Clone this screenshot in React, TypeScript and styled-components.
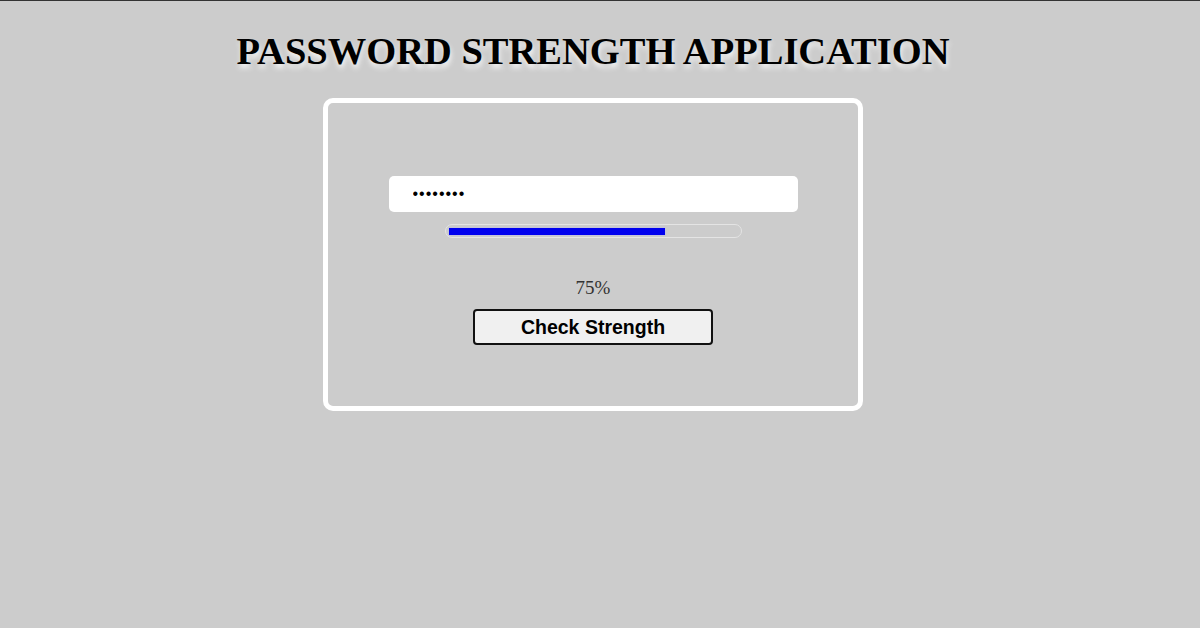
import React from "react";
import styled, { createGlobalStyle } from "styled-components";

const Global = createGlobalStyle`
  html, body { margin: 0; padding: 0; background: #cccccc; }
  body { border-top: 1px solid #333; min-height: 627px; font-family: "Liberation Serif", "Times New Roman", serif; }
`;

const Page = styled.div`
  width: 1186px;
  display: flex;
  flex-direction: column;
  align-items: center;
`;

const Title = styled.h1`
  margin: 28px 0 0;
  font-family: "Liberation Serif", "Times New Roman", serif;
  font-weight: bold;
  font-size: 38.5px;
  line-height: 44px;
  color: #000;
  text-shadow: 1px 4px 5px #f4f4f4;
`;

const Card = styled.div`
  margin-top: 25px;
  width: 530px;
  height: 303px;
  border: 5px solid #ffffff;
  border-radius: 10px;
  display: flex;
  flex-direction: column;
  align-items: center;
  box-sizing: content-box;
`;

const Input = styled.input`
  margin-top: 73px;
  width: 409px;
  height: 36px;
  box-sizing: border-box;
  border: none;
  border-radius: 5px;
  background: #fff;
  padding: 0 0 0 24px;
  font-size: 16px;
  font-family: "Liberation Sans", Arial, sans-serif;
  letter-spacing: 1px;
  color: #000;
  outline: none;
`;

const Track = styled.div`
  margin-top: 12px;
  width: 297px;
  height: 14px;
  box-sizing: border-box;
  border: 1px solid #e4e4e4;
  border-radius: 7px;
  padding: 2px 3px;
  display: flex;
  align-items: center;
`;

const Fill = styled.div`
  height: 7px;
  background: #0000ee;
  box-shadow: 0 0 2px #b0b0ff;
`;

const Percent = styled.div`
  margin-top: 39px;
  font-size: 19px;
  line-height: 22px;
  color: #333;
  font-family: "Liberation Serif", "Times New Roman", serif;
`;

const Button = styled.button`
  margin-top: 10px;
  width: 240px;
  height: 36px;
  box-sizing: border-box;
  background: #f0f0f0;
  border: 2px solid #111;
  border-radius: 4px;
  font-family: "Liberation Sans", Arial, sans-serif;
  font-weight: bold;
  font-size: 19.5px;
  color: #000;
  padding: 0;
  cursor: pointer;
`;

export default function App() {
  const pct = 75;
  return (
    <>
      <Global />
      <Page>
        <Title>PASSWORD STRENGTH APPLICATION</Title>
        <Card>
          <Input type="password" defaultValue="abcdefgh" />
          <Track>
            <Fill style={{ width: `${pct}%` }} />
          </Track>
          <Percent>{pct}%</Percent>
          <Button>Check Strength</Button>
        </Card>
      </Page>
    </>
  );
}
